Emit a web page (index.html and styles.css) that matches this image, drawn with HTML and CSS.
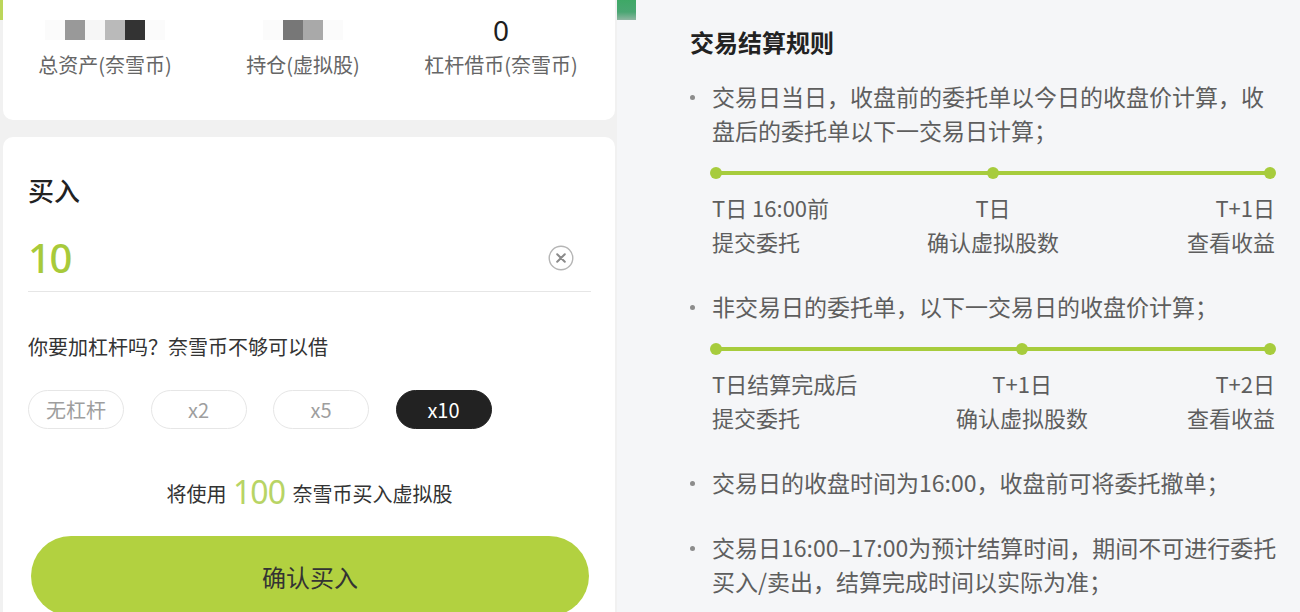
FILE: index.html
```html
<!DOCTYPE html>
<html lang="zh-CN">
<head>
<meta charset="utf-8">
<title>买入</title>
<link rel="stylesheet" href="styles.css">
</head>
<body>
<div class="page">
  <section class="left">
    <span class="edge-mark"></span>
    <div class="card summary">
      <div class="stat">
        <div class="value mosaic"><i class="px p0"></i><i class="px p1"></i><i class="px p2"></i><i class="px p3"></i><i class="px p4"></i><i class="px p0"></i></div>
        <div class="label">总资产(奈雪币)</div>
      </div>
      <div class="stat">
        <div class="value mosaic"><i class="px p0"></i><i class="px p5"></i><i class="px p6"></i><i class="px p0"></i></div>
        <div class="label">持仓(虚拟股)</div>
      </div>
      <div class="stat">
        <div class="value number">0</div>
        <div class="label">杠杆借币(奈雪币)</div>
      </div>
    </div>

    <div class="card buy">
      <h2 class="buy-title">买入</h2>
      <div class="amount-row">
        <span class="amount">10</span>
        <svg class="clear" viewBox="0 0 26 26" width="26" height="26" aria-hidden="true">
          <circle cx="13" cy="13" r="11.8" fill="none" stroke="#b5b5b5" stroke-width="1.4"/>
          <path d="M9.2 9.2 L16.8 16.8 M16.8 9.2 L9.2 16.8" stroke="#8a8a8a" stroke-width="2" stroke-linecap="round"/>
        </svg>
      </div>
      <p class="question">你要加杠杆吗？奈雪币不够可以借</p>
      <div class="levers">
        <button class="lever">无杠杆</button>
        <button class="lever">x2</button>
        <button class="lever">x5</button>
        <button class="lever active">x10</button>
      </div>
      <p class="cost">将使用 <span class="cost-num">100</span> 奈雪币买入虚拟股</p>
      <button class="confirm">确认买入</button>
    </div>
  </section>

  <section class="right">
    <span class="tab-mark"></span>
    <h3 class="rules-title">交易结算规则</h3>
    <ul class="rules">
      <li class="rule">
        <p class="rule-text">交易日当日，收盘前的委托单以今日的收盘价计算，收盘后的委托单以下一交易日计算；</p>
        <div class="timeline timeline-centered">
          <div class="step step-start"><span class="dot"></span><span class="step-label">T日 16:00前</span><span class="step-label">提交委托</span></div>
          <div class="step step-mid"><span class="dot"></span><span class="step-label">T日</span><span class="step-label">确认虚拟股数</span></div>
          <div class="step step-end"><span class="dot"></span><span class="step-label">T+1日</span><span class="step-label">查看收益</span></div>
        </div>
      </li>
      <li class="rule">
        <p class="rule-text">非交易日的委托单，以下一交易日的收盘价计算；</p>
        <div class="timeline timeline-spread">
          <div class="step step-start"><span class="dot"></span><span class="step-label">T日结算完成后</span><span class="step-label">提交委托</span></div>
          <div class="step step-mid"><span class="dot"></span><span class="step-label">T+1日</span><span class="step-label">确认虚拟股数</span></div>
          <div class="step step-end"><span class="dot"></span><span class="step-label">T+2日</span><span class="step-label">查看收益</span></div>
        </div>
      </li>
      <li class="rule">
        <p class="rule-text">交易日的收盘时间为16:00，收盘前可将委托撤单；</p>
      </li>
      <li class="rule">
        <p class="rule-text">交易日16:00–17:00为预计结算时间，期间不可进行委托买入/卖出，结算完成时间以实际为准；</p>
      </li>
    </ul>
  </section>
</div>
</body>
</html>
```

FILE: styles.css
```css
* { box-sizing: border-box; }

html, body {
  margin: 0;
  padding: 0;
}

body {
  width: 1300px;
  height: 612px;
  overflow: hidden;
  font-family: "Noto Sans CJK SC", "Noto Sans", sans-serif;
  color: #333;
}

.page {
  display: flex;
  width: 1300px;
  height: 612px;
  overflow: hidden;
}

/* ---------- left panel ---------- */
.left {
  position: relative;
  width: 617px;
  height: 612px;
  flex: none;
  background: #f1f1f1;
  padding: 0 2px 0 3px;
  display: flex;
  flex-direction: column;
  gap: 17px;
  overflow: hidden;
}

.edge-mark {
  position: absolute;
  left: 0;
  top: 0;
  width: 3px;
  height: 20px;
  background: #bcd65a;
}

.card {
  background: #fff;
}

.summary {
  flex: none;
  height: 120px;
  border-radius: 0 0 10px 10px;
  padding: 14px 15px 0 3px;
  display: grid;
  grid-template-columns: repeat(3, 1fr);
  align-content: start;
}

.stat {
  display: flex;
  flex-direction: column;
  align-items: center;
}

.value {
  height: 32px;
  display: flex;
  align-items: center;
  justify-content: center;
}

.number {
  font-family: "Noto Sans", sans-serif;
  font-size: 28px;
  line-height: 32px;
  color: #1e1e1e;
}

.px {
  display: block;
  width: 20px;
  height: 20px;
}
.p0 { background: #fbfbfb; }
.p1 { background: #999999; }
.p2 { background: #f6f6f6; }
.p3 { background: #bababa; }
.p4 { background: #333333; }
.p5 { background: #777777; }
.p6 { background: #a9a9a9; }

.label {
  margin-top: 5px;
  font-size: 20px;
  line-height: 28px;
  color: #666;
  white-space: nowrap;
}

.buy {
  flex: 1;
  min-height: 0;
  overflow: hidden;
  border-radius: 10px 10px 0 0;
  padding: 36px 24px 0 25px;
}

.buy-title {
  margin: 0;
  font-size: 26px;
  line-height: 34px;
  font-weight: 500;
  color: #222;
}

.amount-row {
  margin-top: 18px;
  height: 67px;
  display: flex;
  align-items: center;
  justify-content: space-between;
  border-bottom: 1.5px solid #e6e6e6;
  padding-bottom: 1px;
}

.amount {
  font-family: "Noto Sans", sans-serif;
  font-size: 40px;
  font-weight: 500;
  line-height: 50px;
  letter-spacing: -1.5px;
  color: #a8ca3a;
}

.clear {
  display: block;
  margin-right: 17px;
}

.question {
  margin: 41px 0 0;
  font-size: 20px;
  line-height: 28px;
  color: #333;
}

.levers {
  margin-top: 29px;
  display: flex;
  gap: 26.5px;
}

.lever {
  width: 96px;
  height: 39px;
  border: 1.5px solid #e6e6e6;
  border-radius: 20px;
  background: #fff;
  font-family: "Noto Sans CJK SC", "Noto Sans", sans-serif;
  font-size: 20px;
  line-height: 1;
  color: #9e9e9e;
  padding: 0;
}

.lever.active {
  background: #222;
  border-color: #222;
  color: #fff;
}

.cost {
  margin: 43px 0 0;
  text-align: center;
  font-size: 20px;
  line-height: 40px;
  color: #333;
}

.cost-num {
  font-family: "Noto Sans", sans-serif;
  font-size: 32px;
  letter-spacing: -1px;
  vertical-align: -2px;
  color: #b8d465;
  padding: 0 3px 0 2px;
}

.confirm {
  display: block;
  margin: 22px 2px 0 3px;
  width: calc(100% - 5px);
  height: 80px;
  border: none;
  border-radius: 40px;
  background: #b2d140;
  font-family: "Noto Sans CJK SC", "Noto Sans", sans-serif;
  font-size: 24px;
  color: #333;
}

/* ---------- right panel ---------- */
.right {
  position: relative;
  flex: 1;
  height: 612px;
  overflow: hidden;
  background: #f5f6f8;
  padding: 25px 20px 0 73px;
}

.tab-mark {
  position: absolute;
  left: 0;
  top: 0;
  width: 19px;
  height: 20px;
  background: linear-gradient(180deg, #3ea866 0%, #4aa673 60%, #8fb6a2 100%);
}

.rules-title {
  margin: 0;
  font-size: 24px;
  line-height: 34px;
  font-weight: 700;
  color: #222;
}

.rules {
  list-style: none;
  margin: 20px 0 0;
  padding: 0;
}

.rule + .rule {
  margin-top: 31px;
}

.rule-text {
  margin: 0;
  padding-left: 22px;
  text-indent: -22px;
  font-size: 23px;
  line-height: 34px;
  color: #5e5e5e;
}

.rule-text::before {
  content: "";
  display: inline-block;
  text-indent: 0;
  width: 5px;
  height: 5px;
  border-radius: 50%;
  background: #8c8c8c;
  margin-right: 17px;
  vertical-align: middle;
  position: relative;
  top: -2px;
}

.timeline {
  margin: 20px 4px 0 20px;
  background: linear-gradient(#a7cc3d, #a7cc3d) no-repeat 6px 4px / calc(100% - 12px) 4px;
}

.timeline-centered {
  display: grid;
  grid-template-columns: 1fr auto 1fr;
}

.timeline-spread {
  display: flex;
  justify-content: space-between;
}

.step {
  display: flex;
  flex-direction: column;
}

.step-start { align-items: flex-start; padding-left: 2px; }
.step-mid { align-items: center; }
.step-end { align-items: flex-end; padding-right: 1px; }

.step-start .dot { margin-left: -2px; }
.step-end .dot { margin-right: -1px; }

.dot {
  display: block;
  width: 12px;
  height: 12px;
  border-radius: 50%;
  background: #a7cc3d;
  margin-bottom: 11px;
}

.step-label {
  font-size: 22px;
  line-height: 34px;
  color: #5e5e5e;
  white-space: nowrap;
}
```
